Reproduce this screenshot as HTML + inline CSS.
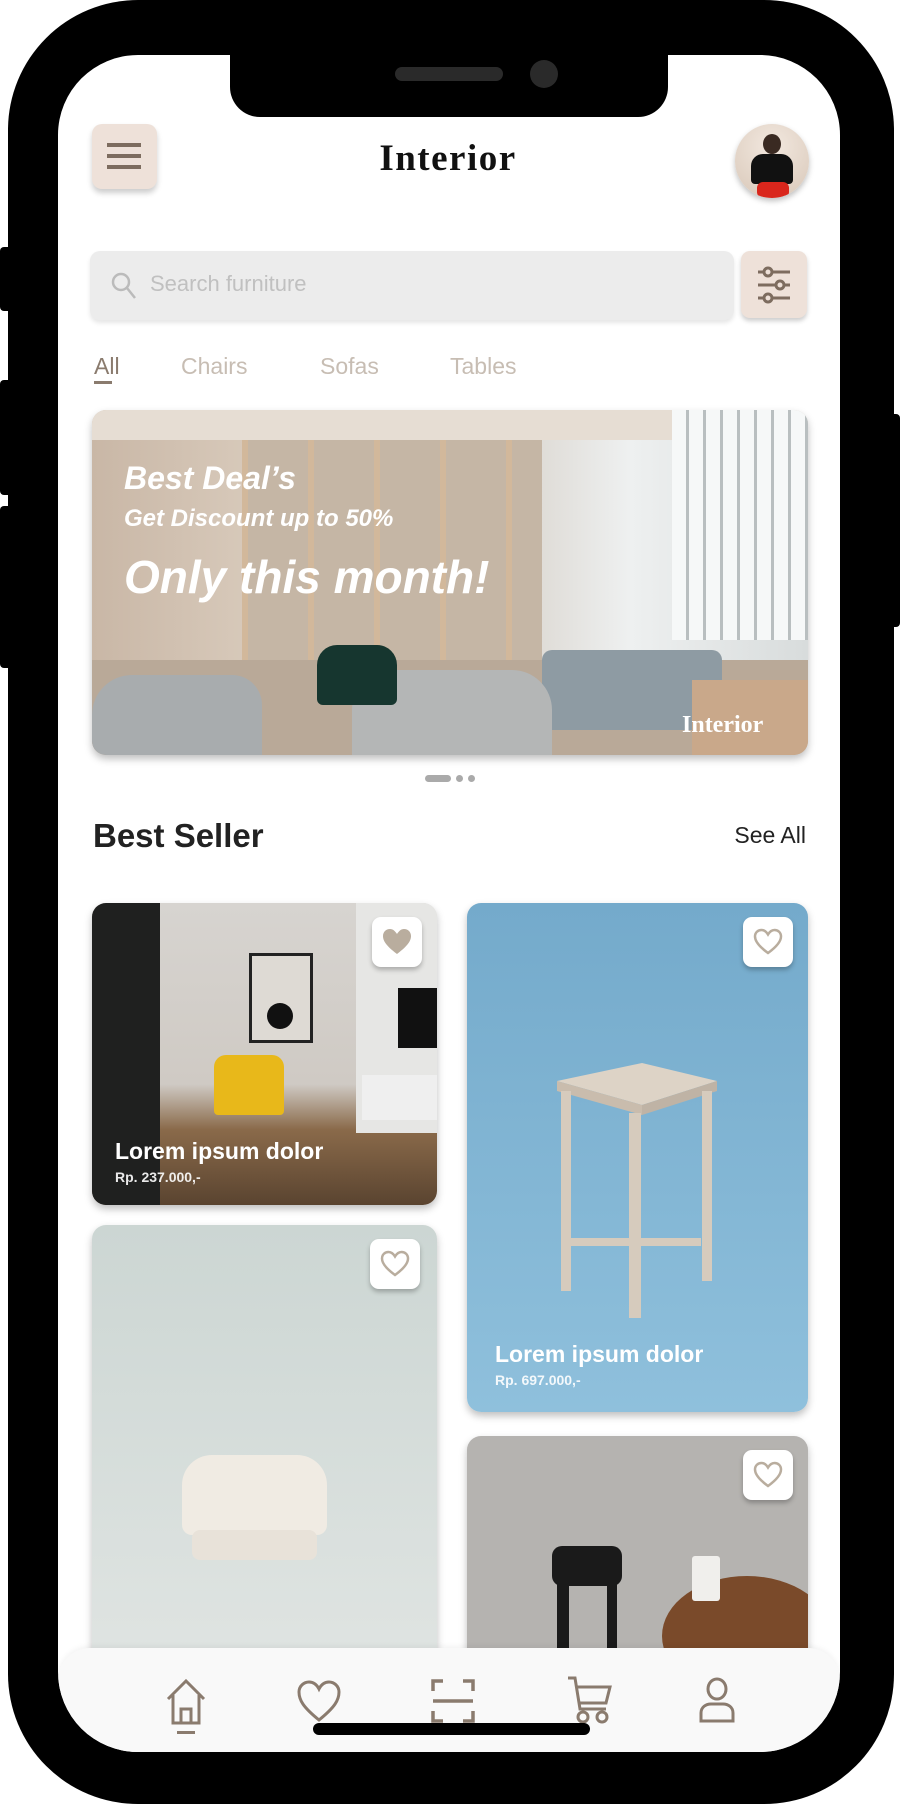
<!DOCTYPE html>
<html><head><meta charset="utf-8"><style>
*{margin:0;padding:0;box-sizing:border-box}
body{width:900px;height:1804px;background:#fff;position:relative;overflow:hidden;font-family:"Liberation Sans",sans-serif}
.a{position:absolute}
.phone{left:8px;top:0;width:886px;height:1804px;background:#000;border-radius:130px}
.screen{left:58px;top:55px;width:782px;height:1697px;background:#fff;border-radius:80px;overflow:hidden}
.card{border-radius:14px;overflow:hidden;box-shadow:0 4px 8px rgba(0,0,0,.25)}
.heart{width:50px;height:50px;background:#fff;border-radius:9px;box-shadow:0 3px 5px rgba(0,0,0,.25);display:flex;align-items:center;justify-content:center}
.ct{color:#fff;font-weight:bold;font-size:23px}
.cp{color:#fff;font-weight:bold;font-size:14px;opacity:.9}
</style></head><body>
<div class="a" style="left:0;top:247px;width:12px;height:64px;background:#000;border-radius:4px"></div>
<div class="a" style="left:0;top:380px;width:12px;height:115px;background:#000;border-radius:4px"></div>
<div class="a" style="left:0;top:506px;width:12px;height:162px;background:#000;border-radius:4px"></div>
<div class="a" style="right:0;top:414px;width:12px;height:213px;background:#000;border-radius:4px"></div>
<div class="a phone"></div>
<div class="a screen">
 <div class="a" style="left:34px;top:69px;width:65px;height:65px;background:#eee1d9;border-radius:10px;box-shadow:0 4px 6px rgba(0,0,0,.2)">
  <div class="a" style="left:15px;top:19px;width:34px;height:4px;background:#7d6c5f"></div>
  <div class="a" style="left:15px;top:30px;width:34px;height:4px;background:#7d6c5f"></div>
  <div class="a" style="left:15px;top:41px;width:34px;height:4px;background:#7d6c5f"></div>
 </div>
 <div class="a" style="left:240px;top:82px;width:300px;text-align:center;font-family:'Liberation Serif',serif;font-weight:bold;font-size:37px;color:#111;letter-spacing:1.5px">Interior</div>
 <div class="a" style="left:677px;top:69px;width:74px;height:74px;border-radius:50%;background:radial-gradient(circle at 50% 30%,#f2e8df,#d8c7b8);overflow:hidden;box-shadow:0 3px 6px rgba(0,0,0,.25)">
  <div class="a" style="left:28px;top:10px;width:18px;height:20px;border-radius:50%;background:#3a2a22"></div>
  <div class="a" style="left:16px;top:30px;width:42px;height:30px;border-radius:12px 12px 4px 4px;background:#111"></div>
  <div class="a" style="left:22px;top:58px;width:32px;height:16px;background:#d9261c;border-radius:6px"></div>
 </div>
 <div class="a" style="left:32px;top:196px;width:644px;height:69px;background:#ececec;border-radius:10px;box-shadow:0 3px 5px rgba(0,0,0,.1)">
  <svg class="a" style="left:20px;top:20px" width="28" height="30" viewBox="0 0 28 30"><circle cx="11" cy="11" r="8" fill="none" stroke="#bbb" stroke-width="2.5"/><line x1="17" y1="17" x2="25" y2="27" stroke="#bbb" stroke-width="2.5"/></svg>
  <div class="a" style="left:60px;top:20px;font-size:22px;color:#c0c0c0">Search furniture</div>
 </div>
 <div class="a" style="left:683px;top:196px;width:66px;height:67px;background:#eee1d9;border-radius:9px;box-shadow:0 3px 5px rgba(0,0,0,.2)">
  <svg class="a" style="left:15px;top:14px" width="36" height="40" viewBox="0 0 36 40" stroke="#7d6c5f" stroke-width="3" fill="none"><line x1="2" y1="7" x2="34" y2="7"/><line x1="2" y1="20" x2="34" y2="20"/><line x1="2" y1="33" x2="34" y2="33"/><circle cx="12" cy="7" r="4" fill="#eee1d9"/><circle cx="24" cy="20" r="4" fill="#eee1d9"/><circle cx="12" cy="33" r="4" fill="#eee1d9"/></svg>
 </div>
 <div class="a" style="left:36px;top:298px;font-size:23px;color:#8a7b6e">All</div>
 <div class="a" style="left:36px;top:326px;width:18px;height:3px;background:#8a7b6e"></div>
 <div class="a" style="left:123px;top:298px;font-size:23px;color:#c7bdb3">Chairs</div>
 <div class="a" style="left:262px;top:298px;font-size:23px;color:#c7bdb3">Sofas</div>
 <div class="a" style="left:392px;top:298px;font-size:23px;color:#c7bdb3">Tables</div>
 <div class="a card" style="left:34px;top:355px;width:716px;height:345px;background:linear-gradient(90deg,#c9b7a6 0%,#e0d4c6 35%,#dcd8d2 60%,#eef0f0 75%,#d8dcdc 100%)">
  <div class="a" style="left:0;top:0;width:716px;height:30px;background:#e6ddd3"></div>
  <div class="a" style="left:150px;top:30px;width:300px;height:230px;background:repeating-linear-gradient(90deg,#d2b89b 0 6px,#c5b6a5 6px 66px)"></div>
  <div class="a" style="left:580px;top:0;width:136px;height:230px;background:repeating-linear-gradient(90deg,#f6f8f8 0 14px,#b9bfc0 14px 17px)"></div>
  <div class="a" style="left:0;top:250px;width:716px;height:95px;background:#b9a998"></div>
  <div class="a" style="left:450px;top:240px;width:180px;height:80px;background:#8e9ba3;border-radius:10px"></div>
  <div class="a" style="left:0;top:265px;width:170px;height:80px;background:#a8acae;border-radius:40px 30px 0 0"></div>
  <div class="a" style="left:260px;top:260px;width:200px;height:85px;background:#b4b6b6;border-radius:40px 40px 0 0"></div>
  <div class="a" style="left:225px;top:235px;width:80px;height:60px;background:#16362f;border-radius:20px 20px 6px 6px"></div>
  <div class="a" style="left:600px;top:270px;width:116px;height:75px;background:#c9a88a"></div>
  <div class="a" style="left:32px;top:50px;color:#fff;font-weight:bold;font-style:italic;font-size:32px">Best Deal’s</div>
  <div class="a" style="left:32px;top:95px;color:#fff;font-weight:bold;font-style:italic;font-size:24px">Get Discount up to 50%</div>
  <div class="a" style="left:32px;top:140px;color:#fff;font-weight:bold;font-style:italic;font-size:46px">Only this month!</div>
  <div class="a" style="left:590px;top:302px;color:#fff;font-family:'Liberation Serif',serif;font-weight:bold;font-size:24px">Interior</div>
 </div>
 <div class="a" style="left:367px;top:720px;width:26px;height:7px;background:#aaa;border-radius:4px"></div>
 <div class="a" style="left:398px;top:720px;width:7px;height:7px;background:#aaa;border-radius:50%"></div>
 <div class="a" style="left:410px;top:720px;width:7px;height:7px;background:#aaa;border-radius:50%"></div>
 <div class="a" style="left:35px;top:762px;font-weight:bold;font-size:33px;color:#222">Best Seller</div>
 <div class="a" style="left:548px;width:200px;text-align:right;top:767px;font-size:23px;color:#222">See All</div>
 <div class="a card" style="left:34px;top:848px;width:345px;height:302px;background:linear-gradient(180deg,#d7d4d0 0%,#cfcac4 60%,#8a6a4a 75%,#5a4430 100%)">
  <div class="a" style="left:0;top:0;width:68px;height:302px;background:#1f201f"></div>
  <div class="a" style="left:264px;top:0;width:81px;height:230px;background:#e6e6e4"></div>
  <div class="a" style="left:157px;top:50px;width:64px;height:90px;border:3px solid #222;background:#dedad4"></div>
  <div class="a" style="left:175px;top:100px;width:26px;height:26px;border-radius:50%;background:#111"></div>
  <div class="a" style="left:306px;top:85px;width:39px;height:60px;background:#111"></div>
  <div class="a" style="left:122px;top:152px;width:70px;height:60px;background:#e8b81a;border-radius:12px 12px 4px 4px"></div>
  <div class="a" style="left:270px;top:172px;width:75px;height:45px;background:#efefef"></div>
  <div class="a ct" style="left:23px;top:235px">Lorem ipsum dolor</div>
  <div class="a cp" style="left:23px;top:266px">Rp. 237.000,-</div>
  <div class="a heart" style="left:280px;top:14px"><svg width="30" height="28" viewBox="0 0 30 28"><path d="M15 26 C3 17 1 12 1 8 C1 4 4 1 8 1 C11 1 13 3 15 6 C17 3 19 1 22 1 C26 1 29 4 29 8 C29 12 27 17 15 26Z" fill="#b9ad9e"/></svg></div>
 </div>
 <div class="a card" style="left:409px;top:848px;width:341px;height:509px;background:linear-gradient(180deg,#74aacb,#8fc0dc)">
  <svg class="a" style="left:80px;top:150px" width="180" height="270" viewBox="0 0 180 270"><polygon points="10,28 95,10 170,28 95,52" fill="#ddd3c6"/><polygon points="10,28 95,52 95,62 10,38" fill="#c9bcad"/><polygon points="95,52 170,28 170,38 95,62" fill="#bfb3a5"/><g fill="#d6cbbd"><rect x="14" y="38" width="10" height="200"/><rect x="82" y="60" width="12" height="205"/><rect x="155" y="38" width="10" height="190"/><rect x="24" y="185" width="130" height="8"/></g></svg>
  <div class="a ct" style="left:28px;top:438px">Lorem ipsum dolor</div>
  <div class="a cp" style="left:28px;top:469px">Rp. 697.000,-</div>
  <div class="a heart" style="left:276px;top:14px"><svg width="30" height="28" viewBox="0 0 30 28"><path d="M15 25 C4 17 2 12 2 8.5 C2 4.5 5 2 8.5 2 C11.5 2 13.5 4 15 6.5 C16.5 4 18.5 2 21.5 2 C25 2 28 4.5 28 8.5 C28 12 26 17 15 25Z" fill="none" stroke="#b9ad9e" stroke-width="2.5"/></svg></div>
 </div>
 <div class="a card" style="left:34px;top:1170px;width:345px;height:500px;background:linear-gradient(180deg,#ccd6d3,#e2e6e4)">
  <div class="a" style="left:90px;top:230px;width:145px;height:80px;background:#f0ebe3;border-radius:30px 30px 10px 10px"></div>
  <div class="a" style="left:100px;top:305px;width:125px;height:30px;background:#e8e2d9;border-radius:8px"></div>
  <div class="a heart" style="left:278px;top:14px"><svg width="30" height="28" viewBox="0 0 30 28"><path d="M15 25 C4 17 2 12 2 8.5 C2 4.5 5 2 8.5 2 C11.5 2 13.5 4 15 6.5 C16.5 4 18.5 2 21.5 2 C25 2 28 4.5 28 8.5 C28 12 26 17 15 25Z" fill="none" stroke="#b9ad9e" stroke-width="2.5"/></svg></div>
 </div>
 <div class="a card" style="left:409px;top:1381px;width:341px;height:300px;background:#b5b3b0">
  <div class="a" style="left:195px;top:140px;width:170px;height:120px;border-radius:50%;background:#7a4a2a"></div>
  <div class="a" style="left:85px;top:110px;width:70px;height:40px;background:#1a1a1a;border-radius:10px"></div>
  <div class="a" style="left:90px;top:140px;width:12px;height:120px;background:#1a1a1a"></div>
  <div class="a" style="left:140px;top:140px;width:10px;height:120px;background:#1a1a1a"></div>
  <div class="a" style="left:225px;top:120px;width:28px;height:45px;background:#f0efec;border-radius:3px"></div>
  <div class="a heart" style="left:276px;top:14px"><svg width="30" height="28" viewBox="0 0 30 28"><path d="M15 25 C4 17 2 12 2 8.5 C2 4.5 5 2 8.5 2 C11.5 2 13.5 4 15 6.5 C16.5 4 18.5 2 21.5 2 C25 2 28 4.5 28 8.5 C28 12 26 17 15 25Z" fill="none" stroke="#b9ad9e" stroke-width="2.5"/></svg></div>
 </div>
 <div class="a" style="left:0;top:1593px;width:782px;height:120px;background:#f9f9f9;border-radius:32px 32px 0 0;box-shadow:0 -2px 6px rgba(0,0,0,.05)"></div>
 <svg class="a" style="left:106px;top:1622px" width="44" height="50" viewBox="0 0 44 50" fill="none" stroke="#8a7b6e" stroke-width="3"><path d="M4 22 L22 4 L40 22 M9 18 V46 H35 V18 M17 46 V32 H27 V46"/></svg>
 <div class="a" style="left:119px;top:1676px;width:18px;height:3px;background:#8a7b6e"></div>
 <svg class="a" style="left:238px;top:1624px" width="46" height="44" viewBox="0 0 46 44"><path d="M23 41 C7 28 3 21 3 13 C3 7 8 3 13 3 C18 3 21 6 23 10 C25 6 28 3 33 3 C38 3 43 7 43 13 C43 21 39 28 23 41Z" fill="none" stroke="#8a7b6e" stroke-width="3"/></svg>
 <svg class="a" style="left:373px;top:1624px" width="44" height="44" viewBox="0 0 44 44" fill="none" stroke="#8a7b6e" stroke-width="3.5"><path d="M2 12 V2 H12 M32 2 H42 V12 M2 32 V42 H12 M32 42 H42 V32 M2 22 H42"/></svg>
 <svg class="a" style="left:508px;top:1620px" width="48" height="50" viewBox="0 0 48 50" fill="none" stroke="#8a7b6e" stroke-width="3"><path d="M2 3 H9 L14 34 H40 M11 12 H44 L40 28 H13"/><circle cx="17" cy="42" r="5"/><circle cx="36" cy="42" r="5"/></svg>
 <svg class="a" style="left:640px;top:1622px" width="38" height="46" viewBox="0 0 38 46" fill="none" stroke="#8a7b6e" stroke-width="3"><ellipse cx="19" cy="12" rx="9" ry="10"/><path d="M3 44 V36 C3 30 8 27 13 27 H25 C30 27 35 30 35 36 V44 Z"/></svg>
 <div class="a" style="left:255px;top:1668px;width:277px;height:12px;background:#000;border-radius:6px"></div>
</div>
<div class="a" style="left:230px;top:40px;width:438px;height:77px;background:#000;border-radius:0 0 30px 30px"></div>
<div class="a" style="left:395px;top:67px;width:108px;height:14px;background:#2a2a2a;border-radius:7px"></div>
<div class="a" style="left:530px;top:60px;width:28px;height:28px;background:#2a2a2a;border-radius:50%"></div>
</body></html>
